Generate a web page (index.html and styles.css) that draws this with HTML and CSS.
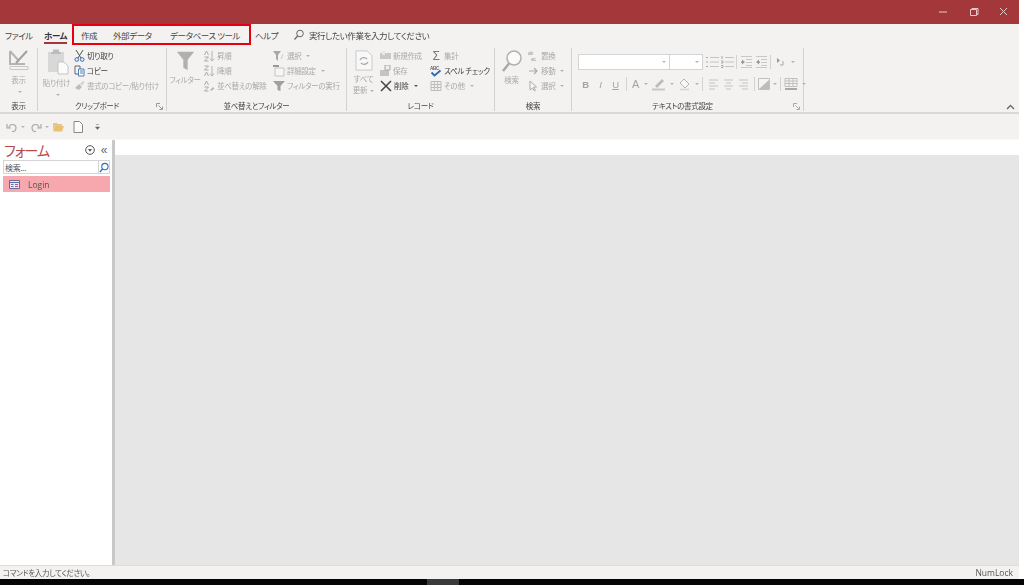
FILE: index.html
```html
<!DOCTYPE html>
<html lang="ja">
<head>
  <meta charset="UTF-8" />
  <title>Access</title>
  <link rel="stylesheet" href="styles.css">
</head>
<body>
  <div class="window">
    <!-- title bar -->
    <div class="titlebar">
      <svg class="win-btn" width="30" height="12" viewBox="0 0 30 12"><path d="M10 6h8" stroke="#e8c9ca" fill="none"/></svg>
      <svg class="win-btn" width="30" height="12" viewBox="0 0 30 12"><path d="M11.500 3.500h6v6h-6zM13 3.500v-1h6v6h-1.500" stroke="#e8c9ca" fill="none"/></svg>
      <svg class="win-btn" width="30" height="12" viewBox="0 0 30 12"><path d="M11 2l7 7M18 2l-7 7" stroke="#e8c9ca" fill="none"/></svg>
    </div>

    <!-- tabs -->
    <div class="tabs">
      <span class="tab tab-file">ファイル</span>
      <span class="tab tab-home">ホーム</span>
      <div class="tab-box">
        <span class="tab tab-create">作成</span>
        <span class="tab tab-data">外部データ</span>
        <span class="tab">データベース ツール</span>
      </div>
      <span class="tab tab-help">ヘルプ</span>
      <svg class="tell-icon" width="12" height="12" viewBox="0 0 12 12"><circle cx="7" cy="4.500" r="3.300" fill="none" stroke="#666"/><path d="M4.600 7L1.500 10.500" stroke="#666" stroke-width="1.200"/></svg>
      <span class="tell">実行したい作業を入力してください</span>
    </div>

    <!-- ribbon -->
    <div class="ribbon">
      <section class="group g-view">
        <div class="group-body">
          <div class="big">
            <svg width="24" height="24" viewBox="0 0 24 24"><path d="M3 3l9 10M3 3v13h15" fill="none" stroke="#b4b4b4" stroke-width="2"/><path d="M9 15l11-12" stroke="#a0a0a0" stroke-width="2"/><path d="M3 18.500h18v3H3z" fill="none" stroke="#c8c8c8"/></svg>
            <span>表示</span>
            <i class="caret big-caret"></i>
          </div>
        </div>
        <div class="group-label">表示</div>
      </section>

      <section class="group g-clip">
        <div class="group-body">
          <div class="big big-paste">
            <svg width="24" height="27" viewBox="0 0 24 27"><path d="M2 4h16v20H2z" fill="#d8d8d8"/><path d="M7 4V1.500h6V4h2v2H5V4z" fill="#bcbcbc"/><path d="M12 14h6l4 4v8H12z" fill="#fbfbfb" stroke="#c4c4c4"/></svg>
            <span>貼り付け</span>
            <i class="caret big-caret"></i>
          </div>
          <div class="col">
            <div class="row on">
              <svg width="11" height="12" viewBox="0 0 11 12"><path d="M2 0l5 8M9 0L4 8" stroke="#555" fill="none"/><circle cx="2.800" cy="9.500" r="1.800" fill="none" stroke="#2b6cb0"/><circle cx="8.200" cy="9.500" r="1.800" fill="none" stroke="#2b6cb0"/></svg>
              <span>切り取り</span>
            </div>
            <div class="row on">
              <svg width="11" height="12" viewBox="0 0 11 12"><path d="M1 1h5v8H1z" fill="#f4f4f4" stroke="#666"/><path d="M4.500 4h5.500v7H4.500z" fill="#fff" stroke="#4a7fb5"/><path d="M6 6h3M6 8h3" stroke="#4a7fb5"/></svg>
              <span>コピー</span>
            </div>
            <div class="row off">
              <svg width="11" height="12" viewBox="0 0 11 12"><path d="M1 8l4-4 3 3-3 3z" fill="#bdbdbd"/><path d="M6 4l3-3 1.500 1.500-3 3z" fill="#d0d0d0"/></svg>
              <span>書式のコピー/貼り付け</span>
            </div>
          </div>
        </div>
        <div class="group-label label-launch">クリップボード</div>
        <svg class="launcher" width="7" height="7" viewBox="0 0 7 7"><path d="M.500 4V.500H4M2.500 2.500L6 6M3.500 6.500h3v-3" fill="none" stroke="#999"/></svg>
      </section>

      <section class="group g-sort">
        <div class="group-body">
          <div class="big big-filter">
            <svg width="19" height="20" viewBox="0 0 22 25" preserveAspectRatio="none"><path d="M1 1h20l-7.500 10v13l-5-3V11z" fill="#b0b0b0"/></svg>
            <span>フィルター</span>
          </div>
          <div class="col col-asc">
            <div class="row off">
              <svg width="12" height="12" viewBox="0 0 12 12"><path d="M9 1v10M7 8.500L9 11l2-2.500" stroke="#b4b4b4" fill="none"/><path d="M1.500 5L3.500 1l2 4M1.500 7h4l-4 4h4" stroke="#aaa" fill="none"/></svg>
              <span>昇順</span>
            </div>
            <div class="row off">
              <svg width="12" height="12" viewBox="0 0 12 12"><path d="M9 1v10M7 8.500L9 11l2-2.500" stroke="#b4b4b4" fill="none"/><path d="M1.500 1h4l-4 4h4M1.500 11l2-4 2 4" stroke="#aaa" fill="none"/></svg>
              <span>降順</span>
            </div>
            <div class="row off">
              <svg width="12" height="12" viewBox="0 0 12 12"><path d="M1.500 5L3.500 1l2 4M1.500 7h4l-4 4h4" stroke="#aaa" fill="none"/><path d="M7 10l3-3 1.500 1.500-3 2.500z" fill="#b8b8b8"/></svg>
              <span>並べ替えの解除</span>
            </div>
          </div>
          <div class="col">
            <div class="row off">
              <svg width="12" height="12" viewBox="0 0 12 12"><path d="M0 1h8L5 5v6L3 9V5z" fill="#a8a8a8"/><path d="M8 9l2-5" stroke="#ccc"/></svg>
              <span>選択</span>
              <i class="caret"></i>
            </div>
            <div class="row off">
              <svg width="12" height="12" viewBox="0 0 12 12"><path d="M0 1h6" stroke="#999" stroke-width="2"/><path d="M2 3h9v8H2z" fill="#f6f6f6" stroke="#c4c4c4"/></svg>
              <span>詳細設定</span>
              <i class="caret"></i>
            </div>
            <div class="row off">
              <svg width="12" height="12" viewBox="0 0 12 12"><path d="M0 1h12L7.500 6v5l-3-1V6z" fill="#a0a0a0"/></svg>
              <span>フィルターの実行</span>
            </div>
          </div>
        </div>
        <div class="group-label">並べ替えとフィルター</div>
      </section>

      <section class="group g-rec">
        <div class="group-body">
          <div class="big big-refresh">
            <svg width="18" height="21" viewBox="0 0 18 23" preserveAspectRatio="none"><path d="M1 1h11l5 5v16H1z" fill="#f8f8f8" stroke="#c8c8c8"/><path d="M5 11a4 4 0 0 1 7-1M13 13a4 4 0 0 1-7 1" fill="none" stroke="#a8a8a8" stroke-width="1.400"/></svg>
            <span>すべて</span>
            <span>更新<i class="caret"></i></span>
          </div>
          <div class="col col-new">
            <div class="row off">
              <svg width="11" height="12" viewBox="0 0 11 12"><path d="M0 3h11v6H0z" fill="#c8c8c8"/><path d="M2 1h3v4H2z" fill="#e8e8e8"/></svg>
              <span>新規作成</span>
            </div>
            <div class="row off">
              <svg width="11" height="12" viewBox="0 0 11 12"><path d="M0 5h9v6H0z" fill="#c4c4c4"/><path d="M5 0h5v5H5z" fill="#eee" stroke="#aaa"/></svg>
              <span>保存</span>
            </div>
            <div class="row on row-del">
              <svg width="12" height="12" viewBox="0 0 12 12"><path d="M1 1l10 10M11 1L1 11" stroke="#444" stroke-width="1.500"/></svg>
              <span>削除</span>
              <i class="caret caret-dark"></i>
            </div>
          </div>
          <div class="col">
            <div class="row off">
              <span class="sigma">Σ</span>
              <span>集計</span>
            </div>
            <div class="row on">
              <svg width="12" height="12" viewBox="0 0 12 12"><text x="0" y="4.500" font-size="4.500" font-family="Liberation Sans" font-weight="700" fill="#666">ABC</text><path d="M1.500 7.500l3 3 6-5" fill="none" stroke="#2b6cb0" stroke-width="1.800"/></svg>
              <span>スペル チェック</span>
            </div>
            <div class="row off">
              <svg width="12" height="12" viewBox="0 0 12 12"><path d="M1 1.500h10v9H1zM1 4.500h10M1 7.500h10M4.300 1.500v9M7.600 1.500v9" fill="none" stroke="#bcbcbc"/></svg>
              <span>その他</span>
              <i class="caret"></i>
            </div>
          </div>
        </div>
        <div class="group-label">レコード</div>
      </section>

      <section class="group g-find">
        <div class="group-body">
          <div class="big big-find">
            <svg width="20" height="23" viewBox="0 0 20 23"><circle cx="12" cy="8" r="7" fill="#fafafa" stroke="#b0b0b0" stroke-width="1.500"/><path d="M7 13.500L1 21" stroke="#a8a8a8" stroke-width="2.500"/></svg>
            <span>検索</span>
          </div>
          <div class="col">
            <div class="row off">
              <svg width="11" height="12" viewBox="0 0 11 12"><text x="0" y="5" font-size="5" font-family="Liberation Sans" fill="#999">ab</text><text x="3" y="11" font-size="5" font-family="Liberation Sans" fill="#999">ac</text></svg>
              <span>置換</span>
            </div>
            <div class="row off">
              <svg width="11" height="12" viewBox="0 0 11 12"><path d="M1 6h8M6 3l3 3-3 3" fill="none" stroke="#aaa" stroke-width="1.200"/></svg>
              <span>移動</span>
              <i class="caret"></i>
            </div>
            <div class="row off">
              <svg width="11" height="12" viewBox="0 0 11 12"><path d="M2 1v9l2.500-2 2 3 1-.8-2-3 3-.2z" fill="#f8f8f8" stroke="#aaa"/></svg>
              <span>選択</span>
              <i class="caret"></i>
            </div>
          </div>
        </div>
        <div class="group-label">検索</div>
      </section>

      <section class="group g-text">
        <div class="group-body text-body">
          <div class="strip">
            <div class="combo combo-font"><i class="caret"></i></div>
            <div class="combo combo-size"><i class="caret"></i></div>
            <svg class="cell" width="15" height="14" viewBox="0 0 15 14"><path d="M5 2.500h9M5 7h9M5 11.500h9" stroke="#c4c4c4"/><path d="M1 2.500h2M1 7h2M1 11.500h2" stroke="#aaa"/></svg>
            <svg class="cell" width="15" height="14" viewBox="0 0 15 14"><path d="M5 2.500h9M5 7h9M5 11.500h9" stroke="#c4c4c4"/><path d="M2 1v3M1 6h2v2H1M1 10.500h2v2H1" stroke="#aaa" fill="none"/></svg>
            <i class="vsep vsep-tight"></i>
            <svg class="cell" width="15" height="14" viewBox="0 0 15 14"><path d="M2 1.500h11M7 4.500h6M7 7.500h6M7 10.500h6M2 12.500h11" stroke="#c8c8c8"/><path d="M2 6.500h1V4.500l3 2.500-3 2.500V8H2z" fill="#999"/></svg>
            <svg class="cell" width="15" height="14" viewBox="0 0 15 14"><path d="M2 1.500h11M7 4.500h6M7 7.500h6M7 10.500h6M2 12.500h11" stroke="#c8c8c8"/><path d="M6 6.500H5V4.500L2 7l3 2.500V8h1z" fill="#999"/></svg>
            <i class="vsep vsep-tight"></i>
            <svg class="cell" width="15" height="14" viewBox="0 0 15 14"><path d="M4 3v5l3-2.500z" fill="#999"/><path d="M10 6v4H7" fill="none" stroke="#aaa"/></svg>
            <i class="caret"></i>
          </div>
          <div class="strip">
            <b class="fmt">B</b>
            <em class="fmt">I</em>
            <u class="fmt">U</u>
            <i class="vsep"></i>
            <span class="fmt fmt-a">A</span><i class="caret"></i>
            <svg class="cell cell-gap" width="16" height="14" viewBox="0 0 16 14"><path d="M4 9l7-7 2 2-7 7z" fill="#bbb"/><path d="M1 12.500h13" stroke="#c8c8c8" stroke-width="2"/></svg><i class="caret"></i>
            <svg class="cell cell-gap" width="15" height="14" viewBox="0 0 15 14"><path d="M7 2l5 5-4 4-5-5z" fill="#f8f8f8" stroke="#b4b4b4"/><path d="M3 12.500h9" stroke="#d4d4d4" stroke-width="1.500"/></svg><i class="caret"></i>
            <i class="vsep"></i>
            <svg class="cell" width="15" height="14" viewBox="0 0 15 14"><path d="M3 3h9M3 6h6M3 9h9M3 12h6" stroke="#c4c4c4"/></svg>
            <svg class="cell" width="15" height="14" viewBox="0 0 15 14"><path d="M3 3h9M5 6h5M3 9h9M5 12h5" stroke="#c4c4c4"/></svg>
            <svg class="cell" width="15" height="14" viewBox="0 0 15 14"><path d="M3 3h9M6 6h6M3 9h9M6 12h6" stroke="#c4c4c4"/></svg>
            <i class="vsep"></i>
            <svg class="cell" width="12" height="14" viewBox="0 0 12 14"><path d="M.500 1.500h11v11H.500z" fill="#f4f4f4" stroke="#c0c0c0"/><path d="M1 12L11 3v9z" fill="#bcbcbc"/></svg><i class="caret"></i>
            <i class="vsep"></i>
            <svg class="cell" width="15" height="14" viewBox="0 0 15 14"><path d="M1 1.500h12v8H1zM1 4h12M1 6.500h12M5 1.500v8M9 1.500v8" fill="none" stroke="#c0c0c0"/><path d="M1 12h12" stroke="#a8a8a8" stroke-width="2"/></svg><i class="caret"></i>
          </div>
        </div>
        <div class="group-label label-launch">テキストの書式設定</div>
        <svg class="launcher" width="7" height="7" viewBox="0 0 7 7"><path d="M.500 4V.500H4M2.500 2.500L6 6M3.500 6.500h3v-3" fill="none" stroke="#aaa"/></svg>
      </section>

      <svg class="collapse" width="9" height="6" viewBox="0 0 9 6"><path d="M1 5l3.500-3.500L8 5" fill="none" stroke="#666" stroke-width="1.300"/></svg>
    </div>

    <!-- quick access toolbar -->
    <div class="qat">
      <svg width="12" height="12" viewBox="0 0 12 12"><path d="M3 6.500a3.500 3.500 0 1 1 3 4M1 3v4h4" fill="none" stroke="#aaa" stroke-width="1.200"/></svg>
      <i class="caret"></i>
      <svg class="qat-redo" width="12" height="12" viewBox="0 0 12 12"><path d="M9 6.500a3.500 3.500 0 1 0-3 4M11 3v4H7" fill="none" stroke="#aaa" stroke-width="1.200"/></svg>
      <i class="caret"></i>
      <svg class="qat-open" width="11" height="10" viewBox="0 0 11 10"><path d="M0 1h4l1 1h4v2H2.500L0 9z" fill="#e3c68c"/><path d="M2.500 4H11L9 9.500H0z" fill="#ecc072"/></svg>
      <svg class="qat-new" width="10" height="12" viewBox="0 0 10 12"><path d="M1 .5h5.500L9.500 3.500v8H1z" fill="#fbfbfb" stroke="#888"/></svg>
      <svg class="qat-more" width="5" height="6" viewBox="0 0 5 6"><path d="M1 0.500h3M0.500 3h4L2.500 5.500z" fill="#666" stroke="#666" stroke-width=".5"/></svg>
    </div>

    <!-- main area -->
    <div class="main">
      <aside class="nav">
        <div class="nav-head">
          <span class="nav-title">フォーム</span>
          <svg class="nav-drop" width="10" height="10" viewBox="0 0 10 10"><circle cx="5" cy="5" r="4.300" fill="none" stroke="#555"/><path d="M3 4h4L5 6.800z" fill="#555"/></svg>
          <span class="nav-close">«</span>
        </div>
        <div class="nav-search">
          <span class="nav-search-text">検索...</span>
          <span class="nav-search-btn">
            <svg width="11" height="11" viewBox="0 0 11 11"><circle cx="6.500" cy="4.500" r="3.500" fill="none" stroke="#2f6fb5" stroke-width="1.200"/><path d="M4 7L1 10.500" stroke="#2f6fb5" stroke-width="1.500"/></svg>
          </span>
        </div>
        <div class="nav-item">
          <svg width="11" height="9" viewBox="0 0 11 9"><path d="M.500.500h10v8H.500z" fill="#e8e8f4" stroke="#6a6a9a"/><path d="M.500 2.500h10" stroke="#6a6a9a"/><path d="M2 4.500h2.500M2 6.500h2.500" stroke="#5a7ab0"/><path d="M6 4.500h3M6 6.500h3" stroke="#b05a70"/></svg>
          <span>Login</span>
        </div>
      </aside>
      <div class="splitter"></div>
      <div class="doc">
        <div class="doc-tabs"></div>
        <div class="doc-space"></div>
      </div>
    </div>

    <!-- status bar -->
    <div class="statusbar">
      <span>コマンドを入力してください。</span>
      <span class="numlock">NumLock</span>
    </div>
  </div>

  <div class="taskbar"><div class="task-active"></div></div>
</body>
</html>
```

FILE: styles.css
```css
* {
  box-sizing: border-box;
}

html, body {
  height: 100%;
}

body {
  margin: 0;
  overflow: hidden;
  background: #fff;
  color: #444;
  font-family: "Noto Sans CJK JP", "Noto Sans", sans-serif;
  font-size: 7.500px;
  letter-spacing: -0.3px;
  font-feature-settings: "palt";
  display: flex;
  flex-direction: column;
}

/* the reference is a soft, rescaled capture */
.window {
  width: 1019px;
  height: 579px;
  display: flex;
  flex-direction: column;
  filter: blur(0.35px);
}

.titlebar {
  height: 24px;
  flex: none;
  background: #a4373a;
  display: flex;
  justify-content: flex-end;
  align-items: center;
}

.win-btn {
  display: block;
}

.tabs {
  height: 21px;
  flex: none;
  background: #f3f2f1;
  display: flex;
  align-items: center;
  font-size: 8.500px;
  letter-spacing: -0.4px;
  color: #444;
}

.tab {
  flex: none;
  white-space: nowrap;
  line-height: 14px;
}

.tab-file {
  margin-left: 5px;
  width: 39px;
}

.tab-home {
  width: 23px;
  height: 16px;
  margin-top: 2px;
  font-weight: 700;
  color: #333;
  padding-bottom: 1px;
  border-bottom: 2px solid #a4373a;
}

.tab-box {
  margin-left: 5px;
  width: 179px;
  height: 21px;
  flex: none;
  border: 2px solid #e60012;
  display: flex;
  align-items: center;
  padding-left: 7px;
}

.tab-create {
  width: 32px;
}

.tab-data {
  width: 57px;
}

.tab-help {
  margin-left: 4px;
  width: 23px;
}

.tell-icon {
  margin-left: 15px;
}

.tell {
  margin-left: 4px;
  white-space: nowrap;
}

.ribbon {
  height: 69px;
  flex: none;
  background: #f3f2f1;
  border-bottom: 2px solid #d8d8d6;
  display: flex;
  position: relative;
  padding-top: 3px;
}

.group {
  position: relative;
  flex: none;
  display: flex;
  flex-direction: column;
  border-right: 1px solid #d2d2d0;
  height: 63px;
}

.group-body {
  height: 51px;
  flex: none;
  display: flex;
}

.group-label {
  height: 12px;
  line-height: 13px;
  text-align: center;
  color: #444;
  white-space: nowrap;
}

.label-launch {
  padding-right: 10px;
}

.launcher {
  position: absolute;
  right: 3px;
  bottom: 1px;
}

.g-view { width: 38px; }
.g-clip { width: 129px; }
.g-sort { width: 180px; }
.g-rec { width: 148px; }
.g-find { width: 77px; }
.g-text { width: 232px; }

.big {
  flex: none;
  width: 37px;
  display: flex;
  flex-direction: column;
  align-items: center;
  color: #aaa;
  line-height: 11px;
  white-space: nowrap;
}

.big svg {
  margin-bottom: 2px;
}

.big-caret {
  margin-top: 6px;
}

.big-paste {
  width: 36px;
  padding-left: 1px;
}

.big-paste svg {
  margin-left: 3px;
}

.big-filter {
  width: 36px;
}

.big-filter svg {
  margin-top: 3px;
  margin-bottom: 3px;
}

.big-refresh {
  width: 33px;
}

.big-refresh svg {
  margin-top: 2px;
}

.big-find {
  width: 33px;
}

.big-find svg {
  margin-top: 2px;
  margin-bottom: 1px;
}

.col {
  flex: none;
  display: flex;
  flex-direction: column;
}

.col-asc {
  width: 70px;
}

.col-new {
  width: 50px;
}

.row {
  height: 15px;
  display: flex;
  align-items: center;
  gap: 2px;
  white-space: nowrap;
}

.row.on {
  color: #3c3c3c;
}

.row.off {
  color: #a8a8a8;
}

.row-del .caret {
  margin-left: 4px;
}

.sigma {
  width: 12px;
  font-size: 12px;
  line-height: 12px;
  text-align: center;
  color: #777;
  font-family: "Liberation Sans", sans-serif;
}

.caret {
  display: inline-block;
  flex: none;
  width: 0;
  height: 0;
  margin-left: 3px;
  border-left: 2px solid transparent;
  border-right: 2px solid transparent;
  border-top: 2px solid #b4b4b4;
  vertical-align: middle;
}

.caret-dark {
  border-top-color: #555;
}

.text-body {
  flex-direction: column;
  padding: 6px 0 0 6px;
  gap: 6px;
}

.strip {
  display: flex;
  align-items: center;
  height: 16px;
}

.combo {
  flex: none;
  height: 16px;
  background: #fff;
  border: 1px solid #d4d4d4;
  display: flex;
  justify-content: flex-end;
  align-items: center;
  padding-right: 3px;
}

.combo-font {
  width: 92px;
}

.combo-size {
  width: 34px;
  margin-right: 2px;
  margin-left: -1px;
}

.cell {
  flex: none;
  display: block;
}

.cell-gap {
  margin-left: 3px;
}

.vsep {
  flex: none;
  width: 1px;
  height: 14px;
  margin: 0 3px;
  background: #d2d2d0;
}

.vsep-tight {
  margin: 0 2px 0 1px;
}

.fmt {
  flex: none;
  width: 15px;
  text-align: center;
  font-size: 9.500px;
  color: #a4a4a4;
  font-family: "Liberation Sans", sans-serif;
}

.fmt-a {
  width: 11px;
  font-size: 11px;
}

.collapse {
  position: absolute;
  right: 4px;
  bottom: 2px;
}

.qat {
  height: 25px;
  flex: none;
  background: #f3f2f1;
  display: flex;
  align-items: center;
  padding-left: 6px;
}

.qat-redo {
  margin-left: 5px;
}

.qat-open {
  margin-left: 4px;
}

.qat-new {
  margin-left: 9px;
}

.qat-more {
  margin-left: 12px;
}

.main {
  flex: 1;
  min-height: 0;
  display: flex;
  border-top: 1px solid #f8f8f8;
  background: #fff;
}

.nav {
  width: 112px;
  flex: none;
  background: #fff;
  padding: 0 2px 0 3px;
}

.nav-head {
  height: 20px;
  display: flex;
  align-items: center;
}

.nav-title {
  flex: 1;
  margin-left: 1px;
  font-size: 14px;
  letter-spacing: -1px;
  line-height: 20px;
  color: #b5484b;
}

.nav-drop {
  margin-right: 6px;
}

.nav-close {
  margin-right: 3px;
  font-size: 12px;
  line-height: 12px;
  color: #666;
  font-family: "Liberation Sans", sans-serif;
}

.nav-search {
  height: 14px;
  border: 1px solid #d4d4d4;
  display: flex;
  align-items: center;
  font-size: 8px;
}

.nav-search-text {
  flex: 1;
  padding-left: 1px;
  color: #555;
}

.nav-search-btn {
  width: 11px;
  height: 12px;
  border-left: 1px solid #d4d4d4;
  display: flex;
  align-items: center;
  justify-content: center;
}

.nav-item {
  margin-top: 2px;
  height: 16px;
  background: #f7a8ae;
  display: flex;
  align-items: center;
  gap: 8px;
  padding-left: 6px;
  color: #555;
  font-size: 8.500px;
  letter-spacing: 0;
  font-family: "Open Sans", sans-serif;
}

.splitter {
  width: 3px;
  flex: none;
  background: #c8c8c8;
}

.doc {
  flex: 1;
  display: flex;
  flex-direction: column;
}

.doc-tabs {
  height: 15px;
  flex: none;
  background: #fff;
}

.doc-space {
  flex: 1;
  background: #e6e6e6;
}

.statusbar {
  height: 14px;
  flex: none;
  background: #f3f2f1;
  border-top: 1px solid #dcdcdc;
  display: flex;
  justify-content: space-between;
  align-items: center;
  padding: 0 6px 0 3px;
  color: #555;
  white-space: nowrap;
}

.numlock {
  font-size: 8.500px;
  letter-spacing: 0;
  font-family: "Open Sans", sans-serif;
}

.taskbar {
  flex: 1;
  background: #050505;
  display: flex;
  padding-left: 427px;
}

.task-active {
  width: 32px;
  background: #3a3a3a;
}
```
